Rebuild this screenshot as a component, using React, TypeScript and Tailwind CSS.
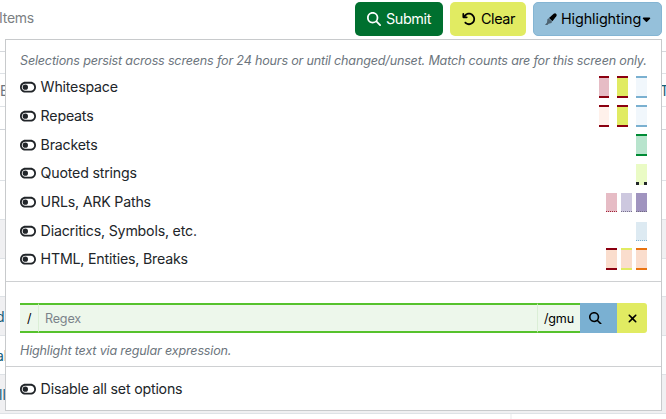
import React from "react";
import { FaMagnifyingGlass, FaXmark, FaToggleOff, FaArrowRotateLeft, FaCaretDown } from "react-icons/fa6";

type Swatch = { box: string; dots?: boolean };
type Row = { label: string; height: string; gap: string; swatches: Swatch[] };

const rows: Row[] = [
  { label: "Whitespace", height: "h-[29px]", gap: "gap-2", swatches: [
    { box: "w-[10px] h-[22px] border-y-2 border-[#8b0010] bg-[#e6bcc5]" },
    { box: "w-[11px] h-[22px] border-y-2 border-[#8b0010] bg-[#e1eb62]" },
    { box: "w-[11px] h-[22px] border-y-2 border-[#7ab0d0] bg-[#f1f7fc]" } ] },
  { label: "Repeats", height: "h-[29px]", gap: "gap-2", swatches: [
    { box: "w-[10px] h-[22px] border-y-2 border-[#8b0010] bg-[#fff1eb]" },
    { box: "w-[11px] h-[22px] border-y-2 border-[#8b0010] bg-[#e1eb62]" },
    { box: "w-[11px] h-[22px] border-y-2 border-[#7ab0d0] bg-[#f1f7fc]" } ] },
  { label: "Brackets", height: "h-[28px]", gap: "gap-1", swatches: [
    { box: "w-[11px] h-[22px] border-y-2 border-[#008b35] bg-[#b8e4cd]" } ] },
  { label: "Quoted strings", height: "h-[29px]", gap: "gap-1", swatches: [
    { box: "mt-[2px] w-[11px] h-[21px] bg-[#eafbc5]", dots: true } ] },
  { label: "URLs, ARK Paths", height: "h-[29px]", gap: "gap-1", swatches: [
    { box: "mt-[2px] w-[11px] h-[19px] border-b border-dotted border-[#a02035] bg-[#e6bcc5]" },
    { box: "mt-[2px] w-[11px] h-[19px] border-b border-dotted border-[#77708c] bg-[#cdc8df]" },
    { box: "mt-[2px] w-[11px] h-[19px] border-b border-dotted border-[#716a82] bg-[#a094bf]" } ] },
  { label: "Diacritics, Symbols, etc.", height: "h-[28px]", gap: "gap-1", swatches: [
    { box: "mt-[2px] w-[11px] h-[19px] border-b border-dotted border-[#7ab0d0] bg-[#ddeaf2]" } ] },
  { label: "HTML, Entities, Breaks", height: "h-[29px]", gap: "gap-1", swatches: [
    { box: "w-[11px] h-[22px] border-y-2 border-[#8b0010] bg-[#faddcd]" },
    { box: "w-[11px] h-[22px] border-y-2 border-[#e1eb62] bg-[#faddcd]" },
    { box: "w-[11px] h-[22px] border-y-2 border-[#e97310] bg-[#faddcd]" } ] },
];

function ToggleRow({ label }: { label: string }) {
  return (
    <div className="flex items-center gap-[5px] text-[14.2px] leading-[22px] tracking-[-0.2px] text-[#212529]">
      <FaToggleOff className="h-[14.4px] w-[16px]" />
      <span className="-ml-[0.4px] whitespace-nowrap">{label}</span>
    </div>
  );
}

// Two-tone marker: dark barrel, grey nib
function MarkerIcon() {
  return (
    <svg viewBox="0 0 12 13" className="mr-[4px] h-[13px] w-[12px]">
      <path d="M4 5 L8.7 .8 Q10.2 -.1 11.2 .9 Q12.2 2 11.3 3.3 L7.4 8.3 Z" fill="#000" />
      <path d="M3.6 5.3 L7.1 8.7 L6.4 10.1 L3.6 10.7 L2.4 12 L0 12 L2 9.4 L2.4 6.3 Z" fill="#3c4c57" fillOpacity=".8" />
    </svg>
  );
}

export default function App() {
  return (
    <div className="relative h-[419px] w-[666px] overflow-hidden bg-white font-['Inter',sans-serif]">
      {/* Table behind the menu */}
      <div className="flex h-[419px] flex-col pt-[51px] text-[14px] text-[#176078]">
        <div className="h-[22px] border-t border-[#d5d8dc]" />
        <div className="flex h-[33px] items-center justify-between border-t border-[#dee2e6]">
          <span className="text-[#6c757d]">E</span><span className="w-[6px]">T</span>
        </div>
        <div className="h-[23px] border-t border-[#dee2e6]" />
        <div className="h-[51px] border-t border-[#d0d4d9]" />
        <div className="h-[39px] border-t border-[#dee2e6]" />
        <div className="h-[39px] border-t border-[#dee2e6] bg-[#f0f0f2]" />
        <div className="h-[38px] border-t border-[#dee2e6]" />
        <div className="flex h-[39px] items-center border-t border-[#dee2e6] bg-[#f0f0f2]"><span className="-ml-[4px]">d</span></div>
        <div className="flex h-[39px] items-center border-t border-[#dee2e6]"><span className="-ml-[4px]">ah</span></div>
        <div className="flex h-[39px] items-center border-t border-[#dee2e6] bg-[#f0f0f2]"><span className="-ml-px">ll</span></div>
        <div className="h-[6px] border-t border-[#dee2e6]"><div className="ml-[510px] h-full w-[2px] bg-[#f4f4f5]" /></div>
      </div>

      {/* Toolbar */}
      <div className="absolute inset-x-0 top-0 flex h-[38px] items-start pt-[2px] pr-[4px] text-[14.4px] leading-[34px]">
        <span className="-ml-px flex-1 pr-px text-[14px] leading-[32px] tracking-[-0.25px] text-[#7b7f83]">Items</span>
        <button className="flex h-[34px] w-[88px] items-center gap-[5px] rounded-[5px] bg-[#00702f] pl-3 tracking-[-0.4px] text-white"><FaMagnifyingGlass className="size-[14px]" />Submit</button>
        <button className="ml-[7px] flex h-[34px] w-[76px] items-center gap-[5px] rounded-[5px] bg-[#e1eb62] pl-3 tracking-[-0.4px] text-black"><FaArrowRotateLeft className="size-[14px]" />Clear</button>
        <button className="ml-[7px] flex h-[34px] w-[129px] items-center rounded-[5px] border border-[#84b5d3] bg-[#95c0da] pl-[11px] text-black"><MarkerIcon /><span className="tracking-[-0.1px]">Highlighting</span>
          <FaCaretDown className="ml-px h-[12px] w-[9px] shrink-0" /></button>
      </div>

      {/* Highlighting menu */}
      <div className="absolute left-[5px] top-[39px] flex h-[372px] w-[657px] flex-col border border-[#c8cacc] bg-white">
        <p className="mt-[11px] h-[22px] whitespace-nowrap pl-[14px] text-[12.6px] leading-[20px] tracking-[-0.187px] italic text-[#6c757d]">
          Selections persist across screens for 24 hours or until changed/unset. Match counts are for this screen only.
        </p>
        <div className="px-[14px]">
          {rows.map((r) => (
            <div key={r.label} className={`flex items-start justify-between pt-[3px] ${r.height}`}>
              <ToggleRow label={r.label} />
              <div className={`flex items-start ${r.gap}`}>
                {r.swatches.map((s, i) => (
                  <div key={i} className={`${s.box} flex items-end justify-between`}>
                    {s.dots && <><i className="size-[3px] bg-[#212529]" /><i className="size-[3px] bg-[#212529]" /></>}
                  </div>
                ))}
              </div>
            </div>
          ))}
        </div>
        <div className="mt-[7px] border-t border-[#ced0d2] px-[14px] pt-[21px]">
          <div className="flex h-[30px] w-[627px] text-[12.6px] leading-[27px]">
            <span className="w-[19px] border-y-2 border-r border-y-[#56c22d] border-r-[#dbeed6] bg-[#edf7eb] pl-[7px]">/</span>
            <span className="flex-1 border-y-2 border-[#56c22d] bg-[#edf7eb] pl-[6px] tracking-[-0.2px] text-[#7b838a]">Regex</span>
            <span className="w-[43px] border-y-2 border-l border-y-[#56c22d] border-l-[#dbeed6] bg-[#edf7eb] pl-[6px] tracking-[-0.2px]">/gmu</span>
            <span className="flex w-[37px] items-center bg-[#7ab0d2] pl-[9px]"><FaMagnifyingGlass className="size-[12.6px]" /></span>
            <span className="flex w-[30px] items-center justify-center rounded-r-[3px] bg-[#e1eb62]"><FaXmark className="size-[13px]" /></span>
          </div>
          <p className="mt-[8px] h-[25px] text-[12.6px] leading-[20px] tracking-[-0.178px] italic text-[#6c757d]">Highlight text via regular expression.</p>
        </div>
        <div className="flex-1 border-t border-[#ced0d2] pl-[14px] pt-[11px]"><ToggleRow label="Disable all set options" /></div>
      </div>
    </div>
  );
}
